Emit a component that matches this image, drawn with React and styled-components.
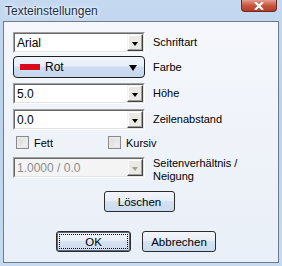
import React from "react";
import styled, { createGlobalStyle } from "styled-components";

const Global = createGlobalStyle`
  html, body { margin: 0; padding: 0; }
  body {
    width: 282px;
    height: 266px;
    overflow: hidden;
    font-family: "Liberation Sans", Arial, sans-serif;
    font-size: 11px;
    color: #000;
  }
`;

const Window = styled.div`
  width: 282px;
  height: 266px;
  box-sizing: border-box;
  background: linear-gradient(#c4d9f0, #bcd3ed 40%, #c6daf1);
  display: flex;
  flex-direction: column;
`;

const TitleBar = styled.div`
  height: 21px;
  display: flex;
  align-items: flex-start;
  justify-content: space-between;
  padding-left: 5px;
`;

const Title = styled.span`
  margin-top: 4px;
  font-family: "Liberation Sans", Arial, sans-serif;
  font-size: 12px;
  color: #1b2f4a;
  text-shadow: 0 0 6px #fff, 0 0 3px #fff;
`;

const CloseButton = styled.div`
  width: 36px;
  height: 12px;
  margin-right: 5px;
  box-sizing: border-box;
  border: 1px solid #6b2a24;
  border-top: none;
  border-radius: 0 0 4px 4px;
  background: linear-gradient(#e19d90, #c9553f 50%, #b53b28);
  display: flex;
  align-items: center;
  justify-content: center;
`;

const Client = styled.div`
  margin: 0 3px 3px 3px;
  flex: 1;
  box-sizing: border-box;
  border: 1px solid #6d7d90;
  background: linear-gradient(#f5f7fb, #e9eff8);
  padding: 10px 0 0 9px;
  display: flex;
  flex-direction: column;
`;

const Row = styled.div`
  display: flex;
  align-items: ${(p) => p.$align || "center"};
  margin-top: ${(p) => p.$top || 0}px;
`;

const Label = styled.span`
  margin-left: 8px;
  line-height: 13px;
`;

const Combo = styled.div`
  width: 132px;
  height: 21px;
  box-sizing: border-box;
  border: 1px solid;
  border-color: #a0a0a0 #fff #fff #a0a0a0;
  background: ${(p) => (p.$disabled ? "#f4f4f4" : "#fff")};
  display: flex;
`;

const ComboInner = styled.div`
  flex: 1;
  border: 1px solid;
  border-color: #696969 #e3e3e3 #e3e3e3 #696969;
  display: flex;
  align-items: center;
`;

const ComboText = styled.span`
  flex: 1;
  padding-left: 2px;
  font-size: 12px;
  color: ${(p) => (p.$disabled ? "#8d8d8d" : "#000")};
`;

const DropButton = styled.div`
  width: 16px;
  height: 100%;
  box-sizing: border-box;
  background: #ece9e4;
  border: 1px solid;
  border-color: #f4f4f4 #404040 #404040 #f4f4f4;
  box-shadow: inset -1px -1px 0 #a0a0a0, inset 1px 1px 0 #fff;
  display: flex;
  align-items: center;
  justify-content: center;
`;

const Arrow = styled.span`
  width: 0;
  height: 0;
  margin-top: 2px;
  border-left: ${(p) => p.$half}px solid transparent;
  border-right: ${(p) => p.$half}px solid transparent;
  border-top: ${(p) => p.$tall}px solid ${(p) => p.$color || "#000"};
`;

const ColorCombo = styled.div`
  width: 132px;
  height: 22px;
  box-sizing: border-box;
  border: 1px solid #1f1f1f;
  border-radius: 4px;
  background: linear-gradient(#f2f6fb, #e6eef8 45%, #cfdff1 50%, #c5d7ee);
  display: flex;
  align-items: center;
  padding: 0 7px 0 6px;
`;

const Swatch = styled.span`
  width: 20px;
  height: 6px;
  background: #d70a1e;
`;

const ColorName = styled.span`
  flex: 1;
  margin-left: 5px;
  font-size: 12px;
`;

const Check = styled.span`
  width: 13px;
  height: 13px;
  box-sizing: border-box;
  border: 1px solid #8a8a8a;
  background: linear-gradient(135deg, #d6d6d6, #f5f5f5);
  box-shadow: inset 0 0 0 2px #e9e9e9;
  margin-left: ${(p) => p.$left || 0}px;
`;

const CheckLabel = styled.span`
  margin-left: 5px;
  width: ${(p) => p.$width || "auto"};
`;

const ButtonRow = styled.div`
  display: flex;
  gap: 11px;
  margin-top: ${(p) => p.$top || 0}px;
  padding-left: ${(p) => p.$pad || 0}px;
`;

const Button = styled.div`
  width: ${(p) => p.$w}px;
  height: 21px;
  box-sizing: border-box;
  border: 1px solid #2c2c2c;
  border-radius: 3px;
  background: linear-gradient(#f2f5fa, #e8eef7 45%, #d5e2f1 50%, #cbdbee);
  display: flex;
  align-items: center;
  justify-content: center;
  position: relative;
  font-size: 11.5px;
  ${(p) =>
    p.$default &&
    `
    box-shadow: inset 0 0 0 1px #5a6a80;
    &::after {
      content: "";
      position: absolute;
      inset: 2px;
      border: 1px dotted #000;
      border-radius: 1px;
    }
  `}
`;

export default function App() {
  return (
    <>
      <Global />
      <Window>
        <TitleBar>
          <Title>Texteinstellungen</Title>
          <CloseButton>
            <svg width="10" height="8" viewBox="0 0 10 8">
              <path d="M1 0 L9 8 M9 0 L1 8" stroke="#fff" strokeWidth="2.2" />
            </svg>
          </CloseButton>
        </TitleBar>
        <Client>
          <Row>
            <Combo>
              <ComboInner>
                <ComboText>Arial</ComboText>
                <DropButton>
                  <Arrow $half={3.5} $tall={4} />
                </DropButton>
              </ComboInner>
            </Combo>
            <Label>Schriftart</Label>
          </Row>
          <Row $top={3}>
            <ColorCombo>
              <Swatch />
              <ColorName>Rot</ColorName>
              <Arrow $half={4} $tall={6} />
            </ColorCombo>
            <Label>Farbe</Label>
          </Row>
          <Row $top={5}>
            <Combo>
              <ComboInner>
                <ComboText>5.0</ComboText>
                <DropButton>
                  <Arrow $half={3.5} $tall={4} />
                </DropButton>
              </ComboInner>
            </Combo>
            <Label>Höhe</Label>
          </Row>
          <Row $top={5}>
            <Combo>
              <ComboInner>
                <ComboText>0.0</ComboText>
                <DropButton>
                  <Arrow $half={3.5} $tall={4} />
                </DropButton>
              </ComboInner>
            </Combo>
            <Label>Zeilenabstand</Label>
          </Row>
          <Row $top={6}>
            <Check $left={3} />
            <CheckLabel $width="74px">Fett</CheckLabel>
            <Check />
            <CheckLabel>Kursiv</CheckLabel>
          </Row>
          <Row $top={8} $align="flex-start">
            <Combo $disabled>
              <ComboInner>
                <ComboText $disabled>1.0000 / 0.0</ComboText>
                <DropButton>
                  <Arrow $half={3.5} $tall={4} $color="#a0a0a0" />
                </DropButton>
              </ComboInner>
            </Combo>
            <Label>
              Seitenverhältnis /
              <br />
              Neigung
            </Label>
          </Row>
          <ButtonRow $top={8} $pad={91}>
            <Button $w={71}>Löschen</Button>
          </ButtonRow>
          <ButtonRow $top={19} $pad={43}>
            <Button $w={75} $default>
              OK
            </Button>
            <Button $w={74}>Abbrechen</Button>
          </ButtonRow>
        </Client>
      </Window>
    </>
  );
}
